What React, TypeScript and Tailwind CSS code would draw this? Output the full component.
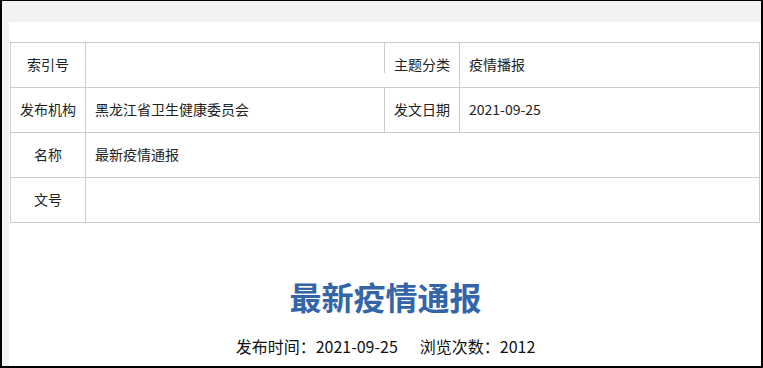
const font = { fontFamily: '"Noto Sans CJK SC", "Noto Sans", sans-serif' };

function Label({ children }: { children?: React.ReactNode }) {
  return (
    <div className="flex h-[45px] items-center justify-center border-r border-b border-[#cccccc] pb-[2px] text-[14px] text-[#222]">
      {children}
    </div>
  );
}

function Value({ children, className = '' }: { children?: React.ReactNode; className?: string }) {
  return (
    <div className={`flex h-[45px] items-center border-r border-b border-[#cccccc] px-[9px] pb-[2px] text-[14px] text-[#222] ${className}`}>
      {children}
    </div>
  );
}

export default function App() {
  return (
    <div
      className="h-[368px] w-[763px] overflow-hidden border-x-2 border-t border-b-2 border-black bg-[#f2f2f2] pt-[21px] pl-[7px]"
      style={font}
    >
      <div className="h-full bg-white pt-[20px] pl-[1px]">
        <div className="grid w-[750px] grid-cols-[75px_299px_75px_300px] border-t border-l border-[#cccccc]">
          <Label>索引号</Label>
          <div className="flex h-[45px] items-start border-b border-[#cccccc]">
            <div className="h-[30px] w-full border-r border-[#cccccc]" />
          </div>
          <Label>主题分类</Label>
          <Value>疫情播报</Value>

          <Label>发布机构</Label>
          <Value>黑龙江省卫生健康委员会</Value>
          <Label>发文日期</Label>
          <Value>2021-09-25</Value>

          <Label>名称</Label>
          <Value className="col-span-3">最新疫情通报</Value>

          <Label>文号</Label>
          <Value className="col-span-3" />
        </div>

        <h1 className="mt-[49px] text-center text-[32px] leading-[48px] font-bold text-[#3465a8]">最新疫情通报</h1>
        <div className="mt-[14px] flex justify-center gap-[22px] text-[16px] leading-[24px] text-[#111]">
          <span>发布时间：2021-09-25</span>
          <span>浏览次数：2012</span>
        </div>
      </div>
    </div>
  );
}
